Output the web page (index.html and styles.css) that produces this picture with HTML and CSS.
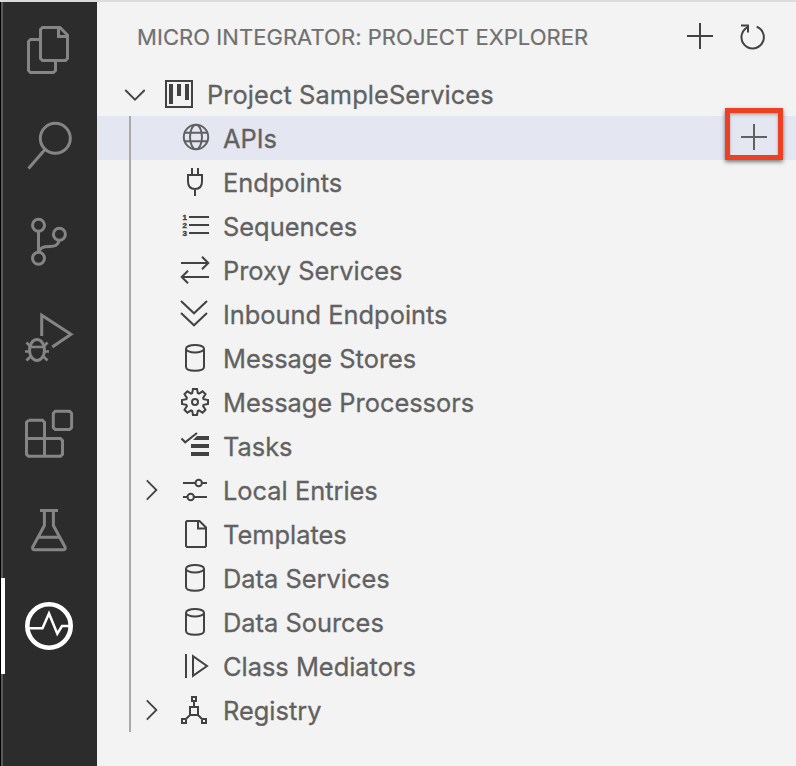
FILE: index.html
```html
<!DOCTYPE html>
<html lang="en">
<head>
<meta charset="utf-8">
<title>Project Explorer</title>
<link rel="stylesheet" href="styles.css">
</head>
<body>
<div class="window">
  <nav class="activity-bar">
    <div class="activity"><svg viewBox="0 0 96 96"><path d="M39.500 37.500H29.500l-2 2v29l2 2h23l2-2V59M41.500 25.500H59l7.500 7.500v23.500l-2 2h-23l-2-2v-29zM57.500 25.500v9h9"/></svg></div>
    <div class="activity"><svg viewBox="0 0 96 96"><circle cx="54.300" cy="40.300" r="15"/><path d="M44 51.500L27.500 70.500"/></svg></div>
    <div class="activity"><svg viewBox="0 0 96 96"><circle cx="37.500" cy="31.300" r="6"/><circle cx="58.400" cy="40.300" r="6"/><circle cx="37.500" cy="64.300" r="6"/><path d="M37.500 37v21M58.400 46C57 51.500 54 52.500 49 52.500C42 52.500 39 53.500 38 58"/></svg></div>
    <div class="activity"><svg viewBox="0 0 96 96"><path d="M40.700 46V25.300L70 44.300L51.300 57"/><ellipse cx="36" cy="60" rx="7.500" ry="10.500"/><path class="fine" d="M28.500 57h15M24 61.500h4.500M43.500 61.500h4.500M25.500 52.500l4 4M46.500 52.500l-4 4M25.500 70.500l4.500-4.500M46.500 70.500l-4.500-4.500"/></svg></div>
    <div class="activity"><svg viewBox="0 0 96 96"><path d="M27.500 34.300h14l2 2V70.300M43.500 52.600h16l2 2v13.700l-2 2h-32l-2-2v-32l2-2M25.500 52.600h18M54.300 25.300h14.300l2 2v14.300l-2 2H54.300l-2-2V27.300z"/></svg></div>
    <div class="activity"><svg viewBox="0 0 96 96"><path d="M39 28.500h18M43.400 29v14.500L31.700 65q-.8 2.700 2 2.700h28.400q2.800 0 2-2.700L52.400 43.500V29M37.500 55.200h21"/></svg></div>
    <div class="activity active"><svg viewBox="0 0 96 96"><circle class="ring" cx="48" cy="48" r="21.700"/><path class="pulse" d="M28 50.300h13.500L48 35.500l8.300 20.200L61 48h8"/></svg></div>
  </nav>
  <main class="sidebar">
    <header class="title-bar">
      <h1 class="title"><span>MICRO INTEGRATOR: PROJECT EXPLORER</span></h1>
      <svg class="action" viewBox="0 0 28 28"><path d="M14 0v26M1 13h26"/></svg>
      <svg class="action" viewBox="0 0 28 28"><path d="M17.700 3.800A11.200 11.200 0 1 1 8.500 4.300M2 2.500h7v7"/></svg>
    </header>
    <div class="row root">
      <svg class="chevron" viewBox="0 0 24 44"><path d="M2.300 18L12 27.700L21.700 18"/></svg>
      <svg class="icon" viewBox="0 0 32 44"><path d="M3 9h26v26H3z"/><path class="solid" d="M6 12h4v20H6zM14 12h4v12h-4zM22 12h4v16h-4z"/></svg>
      <span class="label">Project SampleServices</span>
    </div>
    <div class="tree">
      <div class="row selected"><span class="chevron"></span><svg class="icon" viewBox="0 0 32 44"><circle cx="17" cy="21" r="12.200"/><ellipse cx="17" cy="21" rx="6" ry="12.200"/><path d="M5.500 16.700h23M5.500 25.300h23"/></svg><span class="label">APIs</span>
        <span class="callout"><svg viewBox="0 0 28 28"><path d="M14 1v26M1 14h26"/></svg></span></div>
      <div class="row"><span class="chevron"></span><svg class="icon" viewBox="0 0 32 44"><path d="M13 8v7M19 8v7M9 15h14v6.500q0 7.500-7 7.500t-7-7.500zM16 29v7"/></svg><span class="label">Endpoints</span></div>
      <div class="row"><span class="chevron"></span><svg class="icon" viewBox="0 0 32 44"><path d="M10 13h20M10 21h20M10 29h20"/><text x="3.500" y="16">1</text><text x="3.500" y="24">2</text><text x="3.500" y="32">3</text></svg><span class="label">Sequences</span></div>
      <div class="row"><span class="chevron"></span><svg class="icon" viewBox="0 0 32 44"><path d="M2 15h27.500M23 8.700l6.300 6.300l-6.300 6.300M30 29H2.500M9 22.700L2.700 29L9 35.300"/></svg><span class="label">Proxy Services</span></div>
      <div class="row"><span class="chevron"></span><svg class="icon" viewBox="0 0 32 44"><path d="M2 9l13 12.300L28 9M2 21l13 12.300L28 21"/></svg><span class="label">Inbound Endpoints</span></div>
      <div class="row"><span class="chevron"></span><svg class="icon" viewBox="0 0 32 44"><ellipse cx="16" cy="12.700" rx="9" ry="3.800"/><path d="M7 12.700V31c0 5 18 5 18 0V12.700"/></svg><span class="label">Message Stores</span></div>
      <div class="row"><span class="chevron"></span><svg class="icon" viewBox="0 0 32 44"><circle cx="16" cy="22" r="3"/><path d="M14 9h4l.8 4 1.200.6 3.600-2.300 2.900 2.900-2.400 3.700.5 1.300 4.400.8v4l-4.400.8-.5 1.300 2.400 3.700-2.900 2.900-3.600-2.300-1.200.6-.8 4h-4l-.8-4-1.200-.6-3.600 2.300-2.900-2.900 2.400-3.700-.5-1.300-4.400-.8v-4l4.400-.8.5-1.300-2.400-3.700 2.900-2.900 3.600 2.300 1.200-.6z"/></svg><span class="label">Message Processors</span></div>
      <div class="row"><span class="chevron"></span><svg class="icon" viewBox="0 0 32 44"><path d="M2.500 14.500L6.200 18.300L18 9"/><path class="solid" d="M18 12h12v4H14zM12 20h18v4H12zM12 28h18v4H12z"/></svg><span class="label">Tasks</span></div>
      <div class="row"><svg class="chevron" viewBox="0 0 24 44"><path d="M6.800 12.300L16.400 22L6.800 31.700"/></svg><svg class="icon" viewBox="0 0 32 44"><path d="M4 15h12.500M23 15h5M4 29h4.500M15 29h13"/><circle cx="19.700" cy="15" r="3.200"/><circle cx="11.700" cy="29" r="3.200"/></svg><span class="label">Local Entries</span></div>
      <div class="row"><span class="chevron"></span><svg class="icon" viewBox="0 0 32 44"><path d="M8 9h12.500L27 15.500V34l-1 1H8l-1-1V10zM19 9v7.500h8"/></svg><span class="label">Templates</span></div>
      <div class="row"><span class="chevron"></span><svg class="icon" viewBox="0 0 32 44"><ellipse cx="16" cy="12.700" rx="9" ry="3.800"/><path d="M7 12.700V31c0 5 18 5 18 0V12.700"/></svg><span class="label">Data Services</span></div>
      <div class="row"><span class="chevron"></span><svg class="icon" viewBox="0 0 32 44"><ellipse cx="16" cy="12.700" rx="9" ry="3.800"/><path d="M7 12.700V31c0 5 18 5 18 0V12.700"/></svg><span class="label">Data Sources</span></div>
      <div class="row"><span class="chevron"></span><svg class="icon" viewBox="0 0 32 44"><path d="M7 10v24M14 12.200v19.600L28 22z"/></svg><span class="label">Class Mediators</span></div>
      <div class="row"><svg class="chevron" viewBox="0 0 24 44"><path d="M6.800 12.300L16.400 22L6.800 31.700"/></svg><svg class="icon" viewBox="0 0 32 44"><path d="M13 9h4v4h-4zM11 19h8v8h-8zM3 31h4v4H3zM23 31h4v4h-4zM15 13v6M11 27l-4.500 4.500M19 27l4.500 4.500"/></svg><span class="label">Registry</span></div>
    </div>
  </main>
</div>
</body>
</html>
```
FILE: styles.css
```css
* { box-sizing: border-box; }
body { margin: 0; font-family: Inter, "Liberation Sans", sans-serif; background: #f3f3f3; color: #616161; }
svg { display: block; flex: none; fill: none; stroke: currentColor; stroke-width: 2; }
.window { display: flex; width: 796px; height: 766px; border-top: 2px solid #dcdcdc; overflow: hidden; }
.activity-bar { width: 97px; flex: none; background: #2c2c2c; border-left: 1px solid #000; box-shadow: inset 2px 0 #5b5959; color: #858585; }
.activity { height: 96px; }
.activity svg { width: 96px; height: 96px; stroke-width: 3; }
.activity .fine { stroke-width: 2.700; }
.activity.active { color: #fff; box-shadow: inset 4px 0 #fff; }
.activity .ring { stroke-width: 4.600; }
.activity .pulse { stroke-width: 2.500; }
.sidebar { flex: 1; min-width: 0; }
.title-bar { height: 70px; display: flex; align-items: center; padding: 0 29px 0 40px; gap: 25px; color: #424242; }
.title { flex: 1; margin: 0; font-size: 22px; font-weight: 400; line-height: 30px; letter-spacing: .05px; white-space: nowrap; color: #707070; -webkit-text-stroke: .2px; }
.action { width: 28px; height: 28px; }
.row { position: relative; height: 44px; display: flex; align-items: center; padding-left: 10px; color: #424242; }
.root { padding-left: 26px; }
.root .icon { margin-left: 16px; }
.root .label { margin-left: 12px; letter-spacing: .08px; }
.tree { position: relative; }
.tree::before { content: ""; position: absolute; z-index: 1; left: 32px; top: 0; width: 2px; height: 616px; background: #a9a9a9; }
.tree .row { padding-left: 43px; }
.tree .icon { margin-left: 15px; }
.tree .label { margin-left: 12px; }
.chevron { width: 24px; height: 44px; flex: none; stroke-width: 1.800; }
.icon { width: 32px; height: 44px; }
.icon .solid { fill: currentColor; stroke: none; }
.icon text { font: bold 8px "Liberation Sans", sans-serif; fill: currentColor; stroke-width: .4; }
.label { font-size: 25.400px; line-height: 44px; padding-top: 2px; white-space: nowrap; color: #616161; -webkit-text-stroke: .3px; }
.selected { background: #e4e6f1; color: #616161; }
.callout { position: absolute; left: 628px; top: -8px; width: 58px; height: 52px; border: 5px solid #ec4025; box-shadow: 0 2px 4px rgba(0,0,0,.5), inset 0 2px 3px rgba(0,0,0,.3); display: flex; justify-content: center; padding: 10px 0 0; }
.callout svg { width: 28px; height: 28px; }
```
